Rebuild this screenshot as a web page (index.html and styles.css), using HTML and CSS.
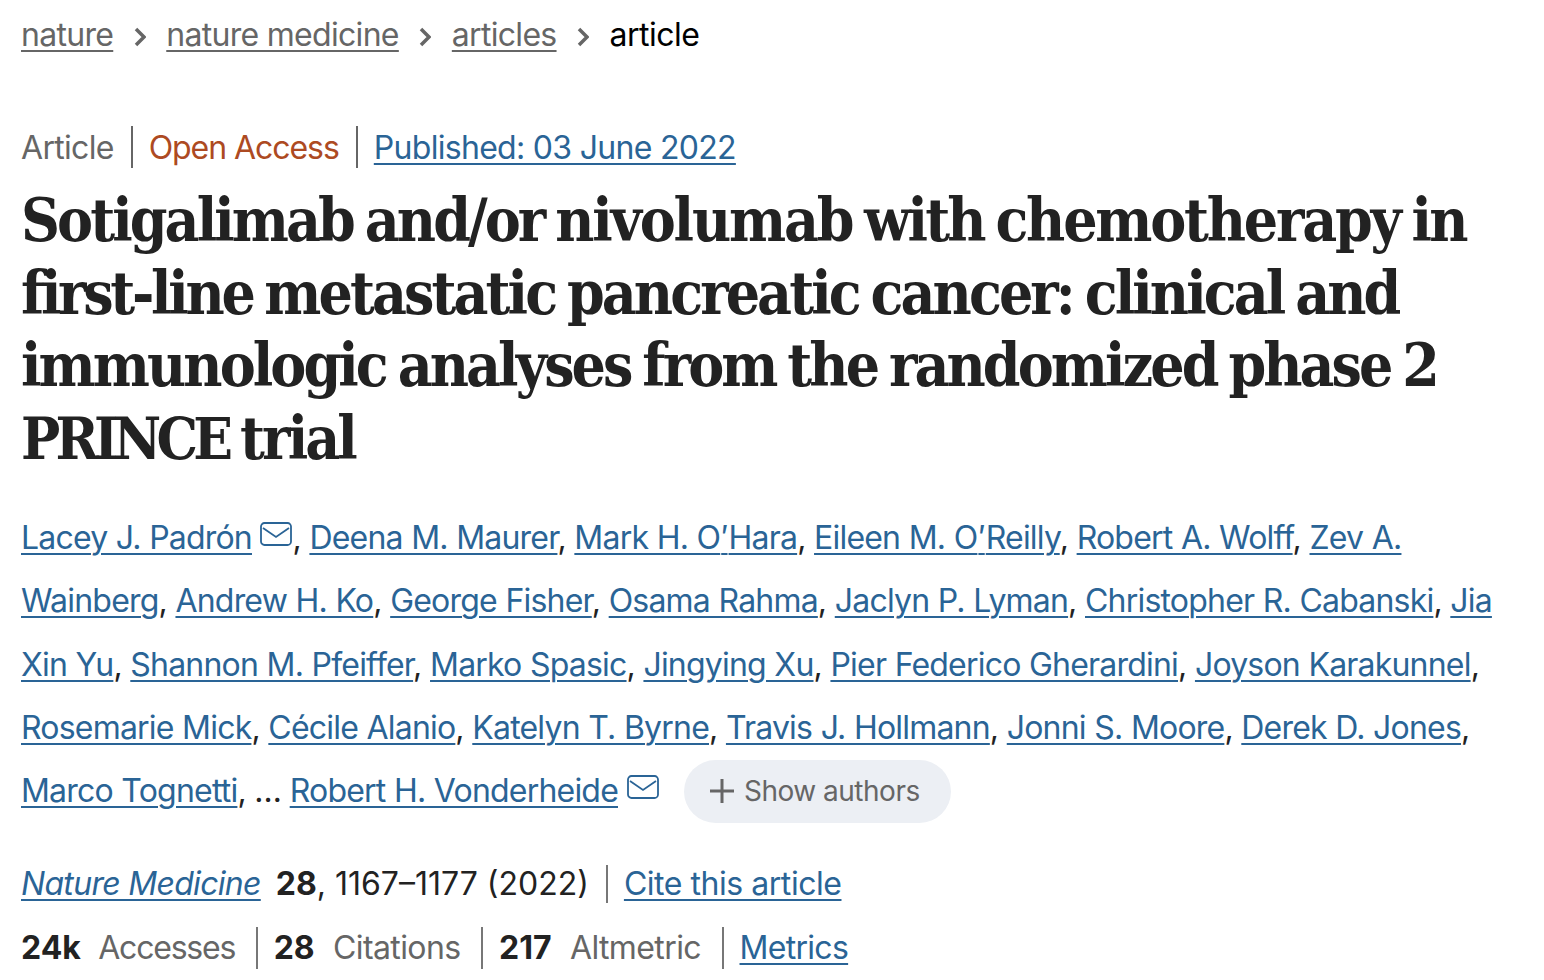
FILE: index.html
```html
<!DOCTYPE html>
<html lang="en">
<head>
  <meta charset="UTF-8" />
  <title>Sotigalimab and/or nivolumab with chemotherapy</title>
  <link rel="stylesheet" href="styles.css">
</head>
<body>
  <nav class="crumbs">
    <a href="#">nature</a>
    <svg class="chevron" viewBox="0 0 12 20"><path d="M2 2l8 8-8 8" /></svg>
    <a href="#">nature medicine</a>
    <svg class="chevron" viewBox="0 0 12 20"><path d="M2 2l8 8-8 8" /></svg>
    <a href="#">articles</a>
    <svg class="chevron" viewBox="0 0 12 20"><path d="M2 2l8 8-8 8" /></svg>
    <span class="crumb-current">article</span>
  </nav>

  <ul class="meta">
    <li class="meta-type">Article</li>
    <li class="meta-open">Open Access</li>
    <li><a href="#">Published: 03 June 2022</a></li>
  </ul>

  <h1 class="title">Sotigalimab and/or <span class="title-loose">nivolumab</span> with <span class="title-loose">chemotherapy</span> in <span class="title-tight">first-line</span> metastatic pancreatic cancer: clinical and immunologic analyses from the randomized phase 2 <span class="title-caps">PRINCE</span> trial</h1>

  <p class="authors">
    <a href="#">Lacey J. Padrón</a> <svg class="mail" viewBox="0 0 32 24"><rect x="1" y="1" width="30" height="22" rx="3.5" /><path d="M3 6l13 9 13-9" /></svg>, <a href="#">Deena M. Maurer</a>, <a href="#">Mark H. O<span class="prime">′</span>Hara</a>, <a href="#">Eileen M. O<span class="prime">′</span>Reilly</a>, <a href="#">Robert A. Wolff</a>, <a href="#">Zev A. Wainberg</a>, <a href="#">Andrew H. Ko</a>, <a href="#">George Fisher</a>, <a href="#">Osama Rahma</a>, <a href="#">Jaclyn P. Lyman</a>, <a href="#">Christopher R. Cabanski</a>, <a href="#">Jia Xin Yu</a>, <a href="#">Shannon M. Pfeiffer</a>, <a href="#">Marko Spasic</a>, <a href="#">Jingying Xu</a>, <a href="#">Pier Federico Gherardini</a>, <a href="#">Joyson Karakunnel</a>, <a href="#">Rosemarie Mick</a>, <a href="#">Cécile Alanio</a>, <a href="#">Katelyn T. Byrne</a>, <a href="#">Travis J. Hollmann</a>, <a href="#">Jonni S. Moore</a>, <a href="#">Derek D. Jones</a>, <a href="#">Marco Tognetti</a>, … <a href="#">Robert H. Vonderheide</a> <svg class="mail" viewBox="0 0 32 24"><rect x="1" y="1" width="30" height="22" rx="3.5" /><path d="M3 6l13 9 13-9" /></svg>
    <button class="show-authors" type="button"><svg class="plus" viewBox="0 0 24 24"><path d="M12 0v24M0 12h24" /></svg>Show authors</button>
  </p>

  <p class="citation">
    <a href="#"><i>Nature Medicine</i></a>
    <span class="citation-ref"><b>28</b>, 1167–1177 (2022)</span>
    <span class="rule"></span>
    <a class="cite-link" href="#">Cite this article</a>
  </p>

  <ul class="metrics">
    <li><b>24k</b> <span>Accesses</span></li>
    <li><b>28</b> <span>Citations</span></li>
    <li><b>217</b> <span>Altmetric</span></li>
    <li><a href="#">Metrics</a></li>
  </ul>
</body>
</html>
```

FILE: styles.css
```css
html, body {
  height: 980px;
  overflow: hidden;
}

body {
  margin: 0;
  padding: 11px 22px 0 21px;
  box-sizing: border-box;
  background: #fff;
  color: #222;
  font-family: Inter, "Liberation Sans", sans-serif;
  font-size: 32px;
  letter-spacing: -0.7px;
}

a {
  color: #2a6496;
  text-decoration: underline;
  text-decoration-thickness: 2px;
  text-underline-offset: 4px;
}

ul {
  list-style: none;
  margin: 0;
  padding: 0;
}

.crumbs {
  display: flex;
  align-items: center;
  height: 46px;
  gap: 20.5px;
}

.crumbs a {
  color: #666;
}

.crumb-current {
  color: #000;
  letter-spacing: -0.5px;
}

.chevron {
  width: 12px;
  height: 20px;
  margin-top: 5px;
  fill: none;
  stroke: #666;
  stroke-width: 3.5;
}

.meta {
  display: flex;
  margin-top: 69px;
  height: 42px;
  line-height: 43px;
}

.meta li {
  padding: 0 17px 0 16px;
  border-left: 2px solid #666;
}

.meta li:first-child {
  padding-left: 0;
  border-left: none;
}

.meta-type {
  color: #666;
}

.meta-open {
  color: #ad4a22;
  letter-spacing: -1.05px;
}

.title {
  margin: 16px 0 0 0;
  font-family: "DejaVu Serif", "Liberation Serif", serif;
  font-stretch: condensed;
  font-size: 60px;
  font-weight: 700;
  line-height: 72.5px;
  letter-spacing: -2.92px;
  word-spacing: -4px;
  color: #222;
}

.title-loose {
  letter-spacing: -2.2px;
}

.title-tight {
  letter-spacing: -3.3px;
}

.title-caps {
  font-size: 58px;
  letter-spacing: -4.8px;
}

.authors {
  margin: 31px 0 0 0;
  line-height: 63.3px;
  letter-spacing: -0.8px;
  word-spacing: 0.3px;
}

.prime {
  padding: 0 1px;
}

.mail {
  width: 32px;
  height: 24px;
  vertical-align: 3px;
  fill: none;
  stroke: #2a6496;
  stroke-width: 1.8;
}

.show-authors {
  display: inline-flex;
  align-items: center;
  gap: 10px;
  height: 63px;
  margin: -2px 0 2px 17px;
  padding: 0 31px 0 26px;
  border: none;
  border-radius: 32px;
  background: #eceff4;
  color: #666;
  font-family: inherit;
  font-size: 28px;
  letter-spacing: -0.5px;
  vertical-align: middle;
}

.plus {
  width: 24px;
  height: 24px;
  fill: none;
  stroke: #666;
  stroke-width: 3;
}

.citation {
  display: flex;
  align-items: center;
  margin: 40px 0 0 0;
  height: 38px;
}

.citation-ref {
  margin-left: 15px;
  letter-spacing: 0;
}

.cite-link {
  letter-spacing: -0.46px;
}

.rule {
  width: 2px;
  height: 38px;
  margin: 0 16px 0 17px;
  background: #777;
}

.metrics {
  display: flex;
  margin-top: 24px;
  height: 42px;
  line-height: 42px;
}

.metrics li {
  padding: 0 20.5px 0 16px;
  border-left: 2px solid #777;
}

.metrics li:first-child {
  padding-left: 0;
  border-left: none;
}

.metrics b {
  letter-spacing: 0;
}

.metrics span {
  margin-left: 10px;
  color: #666;
  letter-spacing: -0.6px;
}

.metrics li:first-child span {
  margin-left: 9px;
  letter-spacing: -1.2px;
}
```
